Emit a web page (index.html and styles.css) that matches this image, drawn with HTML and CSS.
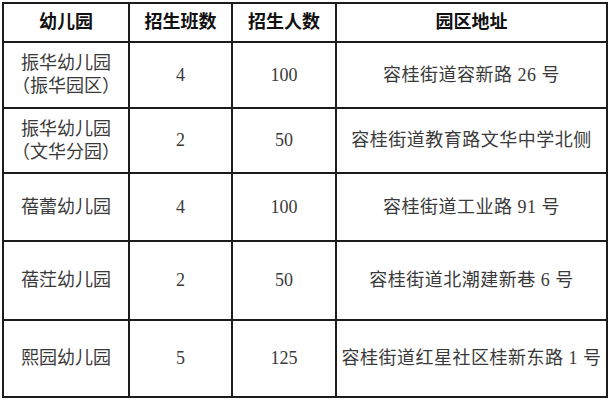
FILE: index.html
```html
<!DOCTYPE html>
<html lang="zh-CN">
<head>
<meta charset="utf-8">
<title>幼儿园招生</title>
<link rel="stylesheet" href="styles.css">
</head>
<body>
<div class="wrap">
<table class="enroll">
  <colgroup>
    <col class="c1"><col class="c2"><col class="c3"><col class="c4">
  </colgroup>
  <thead>
    <tr class="r0"><th>幼儿园</th><th>招生班数</th><th>招生人数</th><th>园区地址</th></tr>
  </thead>
  <tbody>
    <tr class="r1"><td>振华幼儿园<br>（振华园区）</td><td>4</td><td>100</td><td>容桂街道容新路 26 号</td></tr>
    <tr class="r2"><td>振华幼儿园<br>（文华分园）</td><td>2</td><td>50</td><td>容桂街道教育路文华中学北侧</td></tr>
    <tr class="r3"><td>蓓蕾幼儿园</td><td>4</td><td>100</td><td>容桂街道工业路 91 号</td></tr>
    <tr class="r4"><td>蓓茳幼儿园</td><td>2</td><td>50</td><td>容桂街道北潮建新巷 6 号</td></tr>
    <tr class="r5"><td>熙园幼儿园</td><td>5</td><td>125</td><td>容桂街道红星社区桂新东路 1 号</td></tr>
  </tbody>
</table>
</div>
</body>
</html>
```

FILE: styles.css
```css
html, body {
  margin: 0;
  padding: 0;
  background: #fff;
}
.wrap {
  padding: 2px 0 0 2px;
}
.enroll {
  border-collapse: collapse;
  table-layout: fixed;
  width: 604px;
  font-family: "Liberation Serif", "Noto Sans CJK SC", serif;
  font-size: 18px;
  color: #3a3a3a;
}
.c1 { width: 126px; }
.c2 { width: 103px; }
.c3 { width: 104px; }
.c4 { width: 271px; }
.enroll th, .enroll td {
  border: 2px solid #1c1c1c;
  padding: 0;
  text-align: center;
  vertical-align: middle;
  line-height: 23px;
  white-space: nowrap;
}
.enroll th {
  font-weight: bold;
  color: #111;
}
.enroll td:last-child { letter-spacing: 0.5px; }
.r0 { height: 39px; }
.r1 { height: 66px; }
.r2 { height: 65px; }
.r3 { height: 68px; }
.r4 { height: 79px; }
.r5 { height: 77px; }
```
